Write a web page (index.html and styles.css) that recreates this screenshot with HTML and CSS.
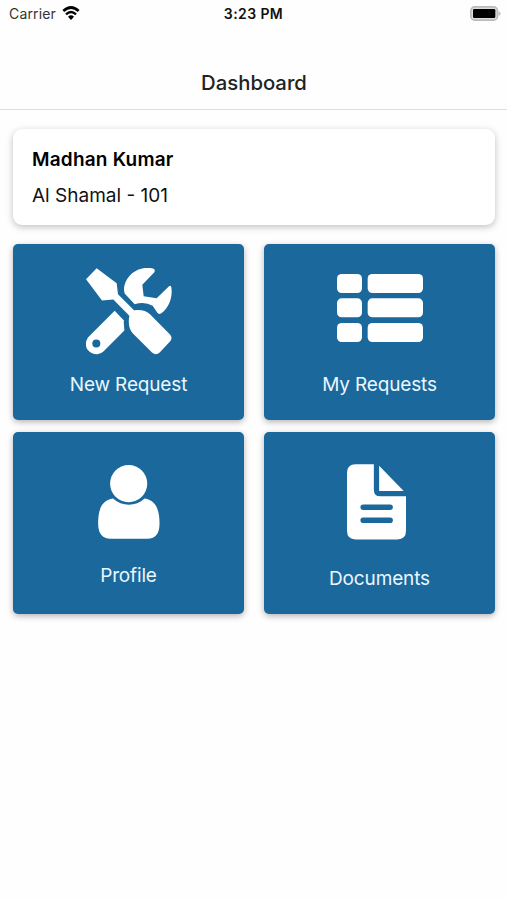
FILE: index.html
```html
<!DOCTYPE html>
<html lang="en">
<head>
	<meta charset="UTF-8">
	<meta name="viewport" content="width=device-width, initial-scale=1">
	<title>Dashboard</title>
	<link rel="stylesheet" href="styles.css">
</head>
<body>
	<div class="status">
		<div class="carrier">
			<span>Carrier</span>
			<svg class="wifi" viewBox="0 0 54 42">
				<path d="M4 15Q27 -6 50 15" fill="none" stroke="#000" stroke-width="8"/>
				<path d="M12 25Q27 11 42 25" fill="none" stroke="#000" stroke-width="7"/>
				<path d="M18 32Q27 24 36 32L27 42Z"/>
			</svg>
		</div>
		<div class="time">3:23 PM</div>
		<svg class="battery" viewBox="0 0 93 45">
			<rect x="2.5" y="2.5" width="80" height="40" rx="12" fill="#ddd" stroke="#bbb" stroke-width="5"/>
			<rect x="9" y="9" width="67" height="27" rx="4"/>
			<path d="M86 16Q92 20 92 23Q92 26 86 30Z" fill="#bbb"/>
		</svg>
	</div>

	<header class="header">
		<h1>Dashboard</h1>
	</header>

	<main>
		<section class="card">
			<h2>Madhan Kumar</h2>
			<p>Al Shamal - 101</p>
		</section>

		<nav class="tiles">
			<a class="tile request">
				<svg viewBox="48 38 258 260">
					<!-- wrench -->
					<path d="M249 39C212 30 174 52 164 88Q160 101 164 114L194 146Q225 137 248 151L262 172Q267 178 274 173C296 159 309 125 304 95Q302 88 297 92L260 128L221 122L217 88L253 50Q257 42 249 39Z"/>
					<path d="M134 166L56 244C35 270 56 298 82 296Q93 295 101 287L163 225L161 194Z"/>
					<circle class="hole" cx="79" cy="264" r="12"/>
					<!-- screwdriver -->
					<path d="M80 38L140 83L144 116L192 164Q224 160 240 176L300 237Q309 247 300 258L269 291Q258 301 246 291L188 233Q172 216 178 181L130 132L96 135L48 71Z"/>
				</svg>
				<span>New Request</span>
			</a>
			<a class="tile list">
				<svg viewBox="0 0 258 204">
					<rect width="75" height="57" rx="14"/>
					<rect x="92" width="166" height="57" rx="14"/>
					<rect y="73" width="75" height="57" rx="14"/>
					<rect x="92" y="73" width="166" height="57" rx="14"/>
					<rect y="147" width="75" height="57" rx="14"/>
					<rect x="92" y="147" width="166" height="57" rx="14"/>
				</svg>
				<span>My Requests</span>
			</a>
			<a class="tile profile">
				<svg viewBox="83 45 186 223">
					<circle cx="175" cy="101" r="56"/>
					<path d="M128 146C90 152 83 185 83 221C83 251 95 267 121 267H231C257 267 268 251 268 221C268 185 260 152 223 146C196 171 155 171 128 146Z"/>
				</svg>
				<span>Profile</span>
			</a>
			<a class="tile documents">
				<svg viewBox="81 42 178 228">
					<path d="M107 42H162V119Q162 139 182 139H259V243Q259 269 233 269H107Q81 269 81 243V68Q81 42 107 42Z"/>
					<path d="M178 47L252 123H178Z"/>
					<path class="lines" d="M130 172H211M130 211H211"/>
				</svg>
				<span>Documents</span>
			</a>
		</nav>
	</main>
</body>
</html>
```

FILE: styles.css
```css
*{
	box-sizing: border-box;
}

body{
	margin: 0;
	background: #fefefe;
	color: #111;
	font-family: Inter, "Liberation Sans", sans-serif;
}

h1, h2, p{
	margin: 0;
}

/* status bar */
.status{
	display: grid;
	grid-template-columns: 1fr auto 1fr;
	align-items: center;
	height: 28px;
	padding: 0 6px 2px 9px;
}
.carrier{
	display: flex;
	align-items: center;
	gap: 6px;
	color: #333;
	font-size: 14px;
	letter-spacing: 0.15px;
}
.wifi{
	width: 18px;
	height: 14px;
}
.time{
	margin-right: 3px;
	font-size: 14px;
	font-weight: 600;
	letter-spacing: 0.4px;
}
.battery{
	justify-self: end;
	width: 31px;
	height: 15px;
}

.header{
	display: flex;
	align-items: center;
	justify-content: center;
	height: 82px;
	padding-top: 28px;
	border-bottom: 1px solid #dedede;
}
.header h1{
	padding-left: 1px;
	color: #222;
	font-size: 20.3px;
	line-height: 24px;
	font-weight: 500;
}

main{
	padding: 19px 12px 19px 13px;
}

.card{
	height: 96px;
	padding: 19px;
	border-radius: 9px;
	background: #fff;
	box-shadow: 0 2px 7px rgba(0, 0, 0, 0.25);
}
.card h2{
	color: #000;
	font-size: 19px;
	line-height: 24px;
	font-weight: 600;
	letter-spacing: 0.2px;
}
.card p{
	margin-top: 12px;
	font-size: 19px;
	line-height: 24px;
}

.tiles{
	display: grid;
	grid-template-columns: 231px 231px;
	grid-template-rows: 176px 182px;
	justify-content: space-between;
	row-gap: 12px;
	margin-top: 19px;
}
.tile{
	display: flex;
	flex-direction: column;
	align-items: center;
	justify-content: space-between;
	border-radius: 5px;
	background: #1b689c;
	color: #eaf7ff;
	font-size: 19px;
	line-height: 24px;
	letter-spacing: -0.15px;
	box-shadow: 0 2px 6px rgba(0, 0, 0, 0.3);
}
.tile svg{
	fill: #fff;
}
.tile .hole{
	fill: #1b689c;
}
.tile .lines{
	stroke: #1b689c;
	stroke-width: 17;
	stroke-linecap: round;
}
.request{
	padding: 24px 0 23px;
}
.request svg{
	width: 86px;
	height: 87px;
}
.list{
	padding: 30px 0 23px;
}
.list svg{
	width: 86px;
	height: 68px;
}
.profile{
	padding: 33px 0 26px;
}
.profile svg{
	width: 62px;
	height: 74px;
}
.documents{
	padding: 32px 0 23px;
}
.documents svg{
	width: 59px;
	height: 76px;
	margin-right: 6px;
}
```
